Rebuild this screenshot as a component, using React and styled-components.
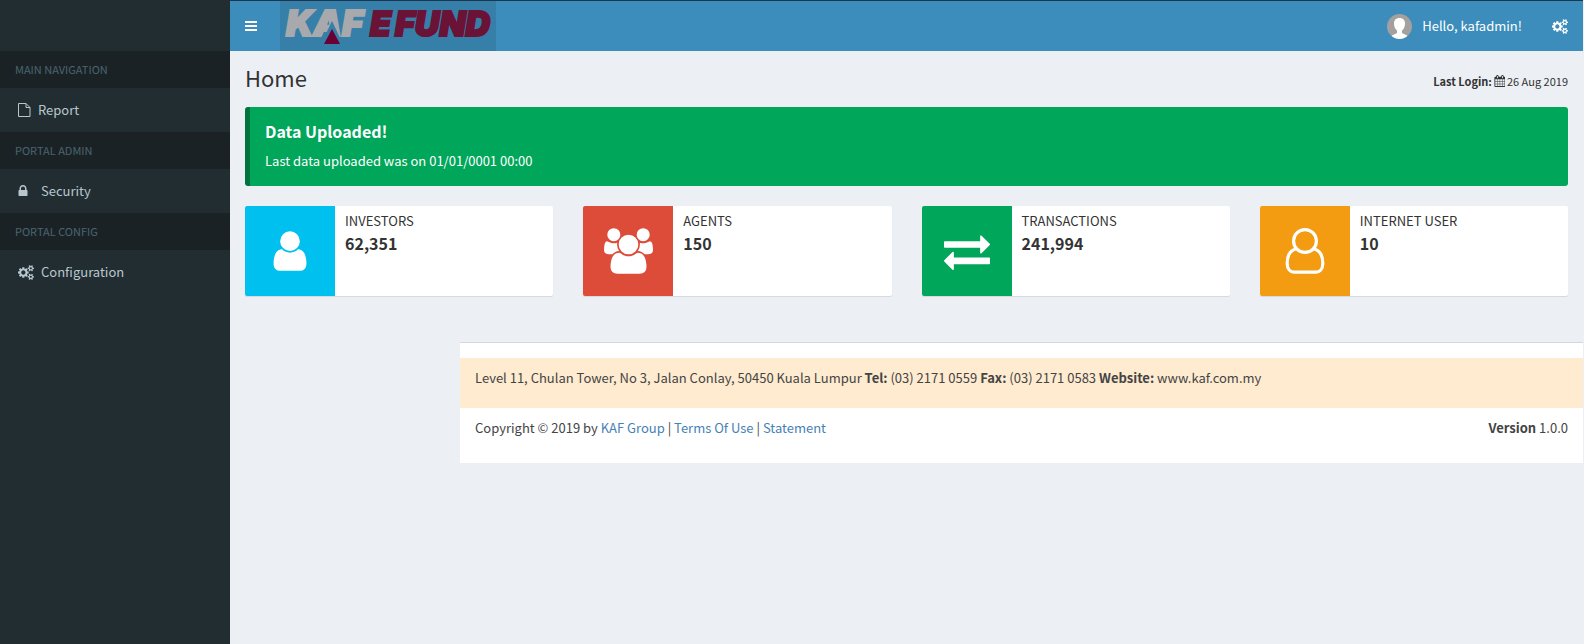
import React from "react";
import styled, { createGlobalStyle } from "styled-components";

const GlobalStyle = createGlobalStyle`
  * { box-sizing: border-box; }
  body {
    margin: 0;
    background: #ecf0f5;
    color: #333;
    font-family: "Noto Sans CJK SC", "Open Sans", sans-serif;
    font-size: 13px;
    line-height: 20px;
  }
  a { color: #4682b4; text-decoration: none; }
`;

const Page = styled.div`
  display: flex;
  min-height: 100vh;
  padding-right: 1px;
`;

const Sidebar = styled.aside`
  flex: 0 0 230px;
  padding-top: 51px;
  background: #222d32;
`;

const NavHeading = styled.h2`
  margin: 0;
  padding: 10px 15px;
  background: #1a2226;
  color: #4b646f;
  font-size: 11px;
  font-weight: 400;
  line-height: 17px;
`;

const NavLink = styled.a`
  display: flex;
  align-items: center;
  gap: ${(p) => p.$gap}px;
  height: 44px;
  padding: 0 18px;
  color: #b8c7ce;
`;

const Column = styled.div`
  flex: 1;
  min-width: 0;
`;

const TopBar = styled.header`
  display: flex;
  align-items: center;
  height: 51px;
  border-top: 1px solid #1c3550;
  background: #3c8dbc;
  color: #fff;
`;

const IconButton = styled.button`
  display: flex;
  align-items: center;
  align-self: stretch;
  padding: 0 15px;
  border: 0;
  background: none;
  color: #fff;
`;

const Brand = styled.a`
  display: flex;
  align-self: stretch;
  width: 216px;
  margin-left: 8px;
  margin-right: auto;
  background: #367fa9;
`;

const UserLink = styled.a`
  display: flex;
  align-items: center;
  gap: 10px;
  padding: 0 15px;
  color: #fff;
`;

const Content = styled.main`
  padding: 15px 15px 0;
`;

const TitleRow = styled.div`
  display: flex;
  align-items: flex-start;
  justify-content: space-between;
  height: 26px;
  margin-bottom: 15px;
`;

const Title = styled.h1`
  margin: 0;
  font-size: 22px;
  font-weight: 400;
  line-height: 22px;
`;

const LastLogin = styled.p`
  display: flex;
  align-items: center;
  gap: 2px;
  margin: 5px 0 0;
  font-size: 11px;
  line-height: 20px;
`;

const Callout = styled.section`
  height: 79px;
  margin-bottom: 20px;
  padding: 15px;
  border-left: 5px solid #00733e;
  border-radius: 3px;
  background: #00a65a;
  color: #fff;
`;

const CalloutTitle = styled.h2`
  margin: 0 0 11px;
  font-size: 16px;
  font-weight: 700;
  line-height: 18px;
`;

const CalloutText = styled.p`
  margin: 0;
`;

const Stats = styled.div`
  display: grid;
  grid-template-columns: repeat(4, 1fr);
  gap: 30px;
`;

const StatBox = styled.section`
  display: flex;
  height: 90px;
  border-radius: 2px;
  overflow: hidden;
  background: #fff;
  box-shadow: 0 1px 1px rgba(0, 0, 0, 0.1);
`;

const StatIcon = styled.div`
  display: flex;
  flex: 0 0 90px;
  align-items: center;
  justify-content: center;
  background: ${(p) => p.$color};
  color: #fff;
`;

const StatBody = styled.div`
  padding: 5px 10px;
`;

const StatLabel = styled.h3`
  margin: 0;
  font-size: 13px;
  font-weight: 400;
  line-height: 20px;
  text-transform: uppercase;
`;

const StatValue = styled.p`
  margin: 0;
  font-size: 16px;
  font-weight: 700;
  line-height: 24px;
`;

const Footer = styled.footer`
  margin: 46px 0 0 230px;
  padding: 15px 0;
  border-top: 1px solid #d2d6de;
  background: #fff;
  color: #444;
`;

const Address = styled.p`
  height: 50px;
  margin: 0;
  padding: 10px 15px;
  background: #feebd0;
`;

const Legal = styled.div`
  display: flex;
  justify-content: space-between;
  height: 40px;
  padding: 10px 15px;
`;

const Glyph = ({ w = 1792, h = 1792, width, height, d }) => (
  <svg width={width} height={height} viewBox={`0 0 ${w} ${h}`} fill="currentColor" aria-hidden="true">
    <path d={d} />
  </svg>
);

const COGS =
  "M896 896q0-106-75-181t-181-75-181 75-75 181 75 181 181 75 181-75 75-181zm768 512q0-52-38-90t-90-38-90 38-38 90q0 53 37.5 90.5t90.5 37.5 90.5-37.5 37.5-90.5zm0-1024q0-52-38-90t-90-38-90 38-38 90q0 53 37.5 90.5t90.5 37.5 90.5-37.5 37.5-90.5zm-384 421v185q0 10-7 19.5t-16 10.5l-155 24q-11 35-32 76 34 48 90 115 7 11 7 20 0 12-7 19-23 30-82.5 89.5t-78.5 59.5q-11 0-21-7l-115-90q-37 19-77 31-11 108-23 155-7 24-30 24h-186q-11 0-20-7.5t-10-17.5l-23-153q-34-10-75-31l-118 89q-7 7-20 7-11 0-21-8-144-133-144-160 0-9 7-19 10-14 41-53t47-61q-23-44-35-82l-152-24q-10-1-17-9.5t-7-19.5v-185q0-10 7-19.5t16-10.5l155-24q11-35 32-76-34-48-90-115-7-11-7-20 0-12 7-20 22-30 82-89t79-59q11 0 21 7l115 90q34-18 77-32 11-108 23-154 7-24 30-24h186q11 0 20 7.5t10 17.5l23 153q34 10 75 31l118-89q8-7 20-7 11 0 21 8 144 133 144 160 0 8-7 19-12 16-42 54t-45 60q23 48 34 82l152 23q10 2 17 10.5t7 19.5zm640 533v140q0 16-149 31-12 27-30 52 51 113 51 138 0 4-4 7-122 71-124 71-8 0-46-47t-52-68q-20 2-30 2t-30-2q-14 21-52 68t-46 47q-2 0-124-71-4-3-4-7 0-25 51-138-18-25-30-52-149-15-149-31v-140q0-16 149-31 13-29 30-52-51-113-51-138 0-4 4-7 4-2 35-20t59-34 30-16q8 0 46 46.5t52 67.5q20-2 30-2t30 2q51-71 92-112l6-2q4 0 124 70 4 3 4 7 0 25-51 138 17 23 30 52 149 15 149 31zm0-1024v140q0 16-149 31-12 27-30 52 51 113 51 138 0 4-4 7-122 71-124 71-8 0-46-47t-52-68q-20 2-30 2t-30-2q-14 21-52 68t-46 47q-2 0-124-71-4-3-4-7 0-25 51-138-18-25-30-52-149-15-149-31v-140q0-16 149-31 13-29 30-52-51-113-51-138 0-4 4-7 4-2 35-20t59-34 30-16q8 0 46 46.5t52 67.5q20-2 30-2t30 2q51-71 92-112l6-2q4 0 124 70 4 3 4 7 0 25-51 138 17 23 30 52 149 15 149 31z";
const USER =
  "M1536 1399q0 109-62.5 187t-150.5 78h-854q-88 0-150.5-78t-62.5-187q0-85 8.5-160.5t31.5-152 58.5-131 94-89 134.5-34.5q131 128 313 128t313-128q76 0 134.5 34.5t94 89 58.5 131 31.5 152 8.5 160.5zm-256-887q0 159-112.5 271.5t-271.5 112.5-271.5-112.5-112.5-271.5 112.5-271.5 271.5-112.5 271.5 112.5 112.5 271.5z";
const USERS =
  "M593 896q-162 5-265 128h-134q-82 0-138-40.5t-56-118.5q0-353 124-353 6 0 43.5 21t97.5 42.5 119 21.5q67 0 133-23-5 37-5 66 0 139 81 256zm1071 637q0 120-73 189.5t-194 69.5h-874q-121 0-194-69.5t-73-189.5q0-53 3.5-103.5t14-109 26.5-108.5 43-97.5 62-81 85.5-53.5 111.5-20q10 0 43 21.5t73 48 107 48 135 21.5 135-21.5 107-48 73-48 43-21.5q61 0 111.5 20t85.5 53.5 62 81 43 97.5 26.5 108.5 14 109 3.5 103.5zm-1024-1277q0 106-75 181t-181 75-181-75-75-181 75-181 181-75 181 75 75 181zm704 384q0 159-112.5 271.5t-271.5 112.5-271.5-112.5-112.5-271.5 112.5-271.5 271.5-112.5 271.5 112.5 112.5 271.5zm576 225q0 78-56 118.5t-138 40.5h-134q-103-123-265-128 81-117 81-256 0-29-5-66 66 23 133 23 59 0 119-21.5t97.5-42.5 43.5-21q124 0 124 353zm-128-609q0 106-75 181t-181 75-181-75-75-181 75-181 181-75 181 75 75 181z";
const EXCHANGE =
  "M1792 1184v192q0 13-9.5 22.5t-22.5 9.5h-1376v192q0 13-9.5 22.5t-22.5 9.5q-12 0-24-10l-319-320q-9-9-9-22 0-14 9-23l320-320q9-9 23-9 13 0 22.5 9.5t9.5 22.5v192h1376q13 0 22.5 9.5t9.5 22.5zm0-544q0 14-9 23l-320 320q-9 9-23 9-13 0-22.5-9.5t-9.5-22.5v-192h-1376q-13 0-22.5-9.5t-9.5-22.5v-192q0-13 9.5-22.5t22.5-9.5h1376v-192q0-14 9-23t23-9q12 0 24 10l319 319q9 9 9 23z";
const LOCK =
  "M384 768h512v-192q0-106-75-181t-181-75-181 75-75 181v192zm832 96v576q0 40-28 68t-68 28h-960q-40 0-68-28t-28-68v-576q0-40 28-68t68-28h32v-192q0-184 132-316t316-132 316 132 132 316v192h32q40 0 68 28t28 68z";
const CALENDAR =
  "M192 1664h288v-288h-288v288zm352 0h320v-288h-320v288zm-352-352h288v-320h-288v320zm352 0h320v-320h-320v320zm-352-384h288v-288h-288v288zm736 736h320v-288h-320v288zm-384-736h320v-288h-320v288zm768 736h288v-288h-288v288zm-384-352h320v-320h-320v320zm-352-864v-288q0-13-9.5-22.5t-22.5-9.5h-64q-13 0-22.5 9.5t-9.5 22.5v288q0 13 9.5 22.5t22.5 9.5h64q13 0 22.5-9.5t9.5-22.5zm736 864h288v-320h-288v320zm-384-384h320v-288h-320v288zm384 0h288v-288h-288v288zm32-480v-288q0-13-9.5-22.5t-22.5-9.5h-64q-13 0-22.5 9.5t-9.5 22.5v288q0 13 9.5 22.5t22.5 9.5h64q13 0 22.5-9.5t9.5-22.5zm384-64v1280q0 52-38 90t-90 38h-1408q-52 0-90-38t-38-90v-1280q0-52 38-90t90-38h128v-96q0-66 47-113t113-47h64q66 0 113 47t47 113v96h384v-96q0-66 47-113t113-47h64q66 0 113 47t47 113v96h128q52 0 90 38t38 90z";

const CogsIcon = () => <Glyph w={1920} width={16} height={15} d={COGS} />;
const UserIcon = () => <Glyph width={46} height={46} d={USER} />;
const UsersIcon = () => <Glyph w={1920} width={49} height={46} d={USERS} />;
const ExchangeIcon = () => <Glyph width={46} height={46} d={EXCHANGE} />;

const UserOutlineIcon = () => (
  <svg width="40" height="46" viewBox="0 0 40 46" fill="none" stroke="#fff" strokeWidth="3.2" aria-hidden="true">
    <circle cx="20" cy="13" r="11.4" />
    <path d="M11.5 20.8C5 22.2 2.2 28 2.2 35.5c0 5 2.8 8.7 7.3 8.7h21c4.500 0 7.300-3.700 7.300-8.700 0-7.500-2.800-13.300-9.300-14.700" />
  </svg>
);

const FileIcon = () => (
  <svg width="13" height="14" viewBox="0 0 13 14" fill="none" stroke="currentColor" aria-hidden="true">
    <path d="M.5.5h7.500l4 4v9H.5zM8 .5v4h4" />
  </svg>
);

const MenuIcon = () => (
  <svg width="12" height="10" viewBox="0 0 12 10" fill="currentColor" aria-hidden="true">
    <path d="M0 0h12v2H0zM0 4h12v2H0zM0 8h12v2H0z" />
  </svg>
);

const Avatar = () => (
  <svg width="25" height="25" viewBox="0 0 25 25" aria-hidden="true">
    <clipPath id="avatar-circle">
      <circle cx="12.500" cy="12.500" r="12.500" />
    </clipPath>
    <g clipPath="url(#avatar-circle)">
      <rect width="25" height="25" fill="#a3a09f" />
      <path
        fill="#fff"
        d="M12.500 4C9 4 7 6.200 7 9.500c0 3 1 5.500 3 7v2.500L5 21.500 2.500 25h20L20 21.500 15 19v-2.500c2-1.500 3-4 3-7C18 6.200 16 4 12.500 4z"
      />
    </g>
  </svg>
);

const LogoText = styled.text`
  fill: ${(p) => p.$color};
  stroke: ${(p) => p.$color};
  stroke-width: 2px;
  font-family: Inter, sans-serif;
  font-size: ${(p) => p.$size}px;
  font-style: italic;
  font-weight: 900;
`;

const Logo = () => (
  <svg width="216" height="50" viewBox="0 0 216 50" role="img" aria-label="KAF E FUND">
    <LogoText x="6" y="35" $size={36} $color="#a7a9ac">KAF</LogoText>
    <LogoText x="90" y="35" $size={34} $color="#6b1237">E</LogoText>
    <LogoText x="115" y="35" $size={34} $color="#6b1237">FUND</LogoText>
    <path d="M52 20L41 43h22z" fill="#367fa9" />
    <path d="M52 28l8 15H44z" fill="#6b0033" />
  </svg>
);

const stats = [
  { label: "Investors", value: "62,351", color: "#00c0ef", Icon: UserIcon },
  { label: "Agents", value: "150", color: "#dd4b39", Icon: UsersIcon },
  { label: "Transactions", value: "241,994", color: "#00a65a", Icon: ExchangeIcon },
  { label: "Internet User", value: "10", color: "#f39c12", Icon: UserOutlineIcon },
];

export default function App() {
  return (
    <>
      <GlobalStyle />
      <Page>
        <Sidebar>
          <nav>
            <NavHeading>MAIN NAVIGATION</NavHeading>
            <NavLink href="#report" $gap={7}>
              <FileIcon /> Report
            </NavLink>
            <NavHeading>PORTAL ADMIN</NavHeading>
            <NavLink href="#security" $gap={13}>
              <Glyph w={1280} width={10} height={14} d={LOCK} /> Security
            </NavLink>
            <NavHeading>PORTAL CONFIG</NavHeading>
            <NavLink href="#configuration" $gap={7}>
              <CogsIcon /> Configuration
            </NavLink>
          </nav>
        </Sidebar>
        <Column>
          <TopBar>
            <IconButton type="button" aria-label="Toggle navigation">
              <MenuIcon />
            </IconButton>
            <Brand href="#home">
              <Logo />
            </Brand>
            <UserLink href="#profile">
              <Avatar /> Hello, kafadmin!
            </UserLink>
            <IconButton type="button" aria-label="Settings">
              <CogsIcon />
            </IconButton>
          </TopBar>
          <Content>
            <TitleRow>
              <Title>Home</Title>
              <LastLogin>
                <b>Last Login:</b>
                <Glyph w={1664} width={11} height={12} d={CALENDAR} />
                <span>26 Aug 2019</span>
              </LastLogin>
            </TitleRow>
            <Callout>
              <CalloutTitle>Data Uploaded!</CalloutTitle>
              <CalloutText>Last data uploaded was on 01/01/0001 00:00</CalloutText>
            </Callout>
            <Stats>
              {stats.map(({ label, value, color, Icon }) => (
                <StatBox key={label}>
                  <StatIcon $color={color}>
                    <Icon />
                  </StatIcon>
                  <StatBody>
                    <StatLabel>{label}</StatLabel>
                    <StatValue>{value}</StatValue>
                  </StatBody>
                </StatBox>
              ))}
            </Stats>
          </Content>
          <Footer>
            <Address>
              Level 11, Chulan Tower, No 3, Jalan Conlay, 50450 Kuala Lumpur <b>Tel:</b> (03) 2171 0559{" "}
              <b>Fax:</b> (03) 2171 0583 <b>Website:</b> www.kaf.com.my
            </Address>
            <Legal>
              <span>
                Copyright © 2019 by <a href="#group">KAF Group</a> | <a href="#terms">Terms Of Use</a> |{" "}
                <a href="#statement">Statement</a>
              </span>
              <span>
                <b>Version</b> 1.0.0
              </span>
            </Legal>
          </Footer>
        </Column>
      </Page>
    </>
  );
}
